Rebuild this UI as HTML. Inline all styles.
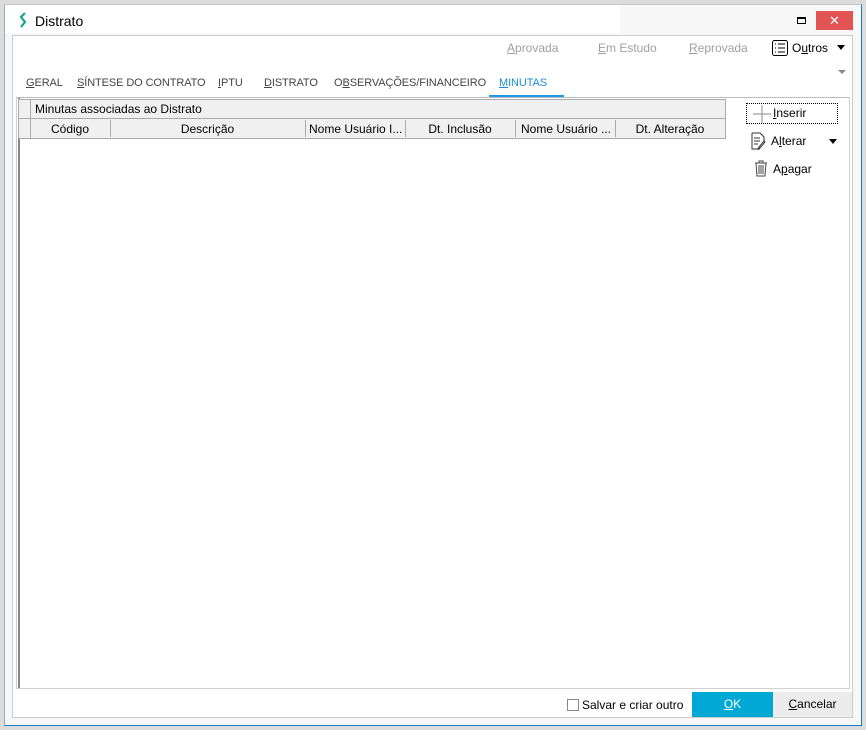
<!DOCTYPE html>
<html><head><style>
*{margin:0;padding:0;box-sizing:border-box}
body{width:866px;height:730px;background:#dcdcdc;font-family:"Segoe UI","Liberation Sans",sans-serif;font-size:12px;color:#000;position:relative;overflow:hidden}
.a{position:absolute}
u{text-decoration:underline}
.t{font-size:11px;color:#444;letter-spacing:-0.1px}
</style></head><body>
<div class="a" style="left:4px;top:4px;width:858px;height:722px;background:#fff;border:1px solid #1979ca;border-top-color:#c8c8c8;border-left-color:#9ab;"></div>
<div class="a" style="left:5px;top:5px;width:856px;height:720px;background:#f7f7f7"></div>
<div class="a" style="left:5px;top:5px;width:615px;height:28px;background:#fff"></div>
<svg class="a" style="left:18px;top:12px" width="10" height="16"><path d="M7 1 L3 5 L7 10 L3 15" stroke="#13a88a" stroke-width="2.2" fill="none"/></svg>
<div class="a" style="left:35px;top:13px;font-size:14px">Distrato</div>
<div class="a" style="left:797px;top:17px;width:9px;height:7px;border:1px solid #000;border-top-width:2px"></div>
<div class="a" style="left:816px;top:11px;width:37px;height:19px;background:#e25454;color:#fff;text-align:center;font-size:13px;line-height:19px">✕</div>
<div class="a" style="left:12px;top:35px;width:841px;height:683px;background:#fff;border:1px solid #ccc"></div>
<div class="a" style="left:507px;top:41px;color:#a0a0a0"><u>A</u>provada</div>
<div class="a" style="left:598px;top:41px;color:#a0a0a0"><u>E</u>m Estudo</div>
<div class="a" style="left:689px;top:41px;color:#a0a0a0"><u>R</u>eprovada</div>
<svg class="a" style="left:772px;top:40px" width="16" height="16"><rect x="0.5" y="0.5" width="15" height="15" rx="2" fill="none" stroke="#000"/><path d="M3 4h1M3 8h1M3 12h1M6 4h7M6 8h7M6 12h7" stroke="#000"/></svg>
<div class="a" style="left:792px;top:41px">O<u>u</u>tros</div>
<div class="a" style="left:837px;top:45px;border:4px solid transparent;border-top:5px solid #000"></div>
<div class="a" style="left:838px;top:70px;border:4px solid transparent;border-top:4px solid #888"></div>
<div class="a t" style="left:26px;top:77px"><u>G</u>ERAL</div>
<div class="a t" style="left:77px;top:77px"><u>S</u>ÍNTESE DO CONTRATO</div>
<div class="a t" style="left:218px;top:77px"><u>I</u>PTU</div>
<div class="a t" style="left:264px;top:77px"><u>D</u>ISTRATO</div>
<div class="a t" style="left:334px;top:77px">O<u>B</u>SERVAÇÕES/FINANCEIRO</div>
<div class="a t" style="left:499px;top:77px;color:#1a8ad8"><u>M</u>INUTAS</div>
<div class="a" style="left:489px;top:95px;width:75px;height:2px;background:#1a9ae8"></div>
<div class="a" style="left:16px;top:97px;width:834px;height:592px;border:1px solid #d0d0d0;border-top-color:#bbb"></div>
<div class="a" style="left:18px;top:98px;width:2px;height:590px;background:#888"></div>
<div class="a" style="left:18px;top:99px;width:708px;height:40px;background:#f0f0f0;border:1px solid #aaa"></div>
<div class="a" style="left:30px;top:99px;width:1px;height:40px;background:#aaa"></div>
<div class="a" style="left:19px;top:118px;width:706px;height:1px;background:#aaa"></div>
<div class="a" style="left:35px;top:102px">Minutas associadas ao Distrato</div>
<div class="a" style="left:30px;top:122px;width:80px;text-align:center">Código</div>
<div class="a" style="left:110px;top:120px;width:1px;height:17px;background:#aaa"></div>
<div class="a" style="left:110px;top:122px;width:195px;text-align:center">Descrição</div>
<div class="a" style="left:305px;top:120px;width:1px;height:17px;background:#aaa"></div>
<div class="a" style="left:309px;top:122px">Nome Usuário I...</div>
<div class="a" style="left:405px;top:120px;width:1px;height:17px;background:#aaa"></div>
<div class="a" style="left:405px;top:122px;width:110px;text-align:center">Dt. Inclusão</div>
<div class="a" style="left:515px;top:120px;width:1px;height:17px;background:#aaa"></div>
<div class="a" style="left:521px;top:122px">Nome Usuário ...</div>
<div class="a" style="left:615px;top:120px;width:1px;height:17px;background:#aaa"></div>
<div class="a" style="left:615px;top:122px;width:110px;text-align:center">Dt. Alteração</div>
<div class="a" style="left:746px;top:103px;width:92px;height:21px;border:1px dotted #000"></div>
<svg class="a" style="left:753px;top:105px" width="18" height="18"><path d="M9 0v18M0 9h18" stroke="#888"/></svg>
<div class="a" style="left:773px;top:106px"><u>I</u>nserir</div>
<svg class="a" style="left:751px;top:132px" width="16" height="18"><path d="M1 1h8l4 4v5M1 1v16h8M3 6h6M3 9h6M3 12h4M13 9l-5 6-1 2 2-1 5-6z" stroke="#333" fill="none"/></svg>
<div class="a" style="left:771px;top:134px">A<u>l</u>terar</div>
<div class="a" style="left:829px;top:139px;border:4px solid transparent;border-top:5px solid #000"></div>
<svg class="a" style="left:754px;top:160px" width="14" height="17"><path d="M1 3h12M5 3V1h4v2M2 3l1 13h8l1-13M5 5v9M7 5v9M9 5v9" stroke="#444" fill="none"/></svg>
<div class="a" style="left:773px;top:162px">A<u>p</u>agar</div>
<div class="a" style="left:567px;top:699px;width:12px;height:12px;border:1px solid #888;background:#fff"></div>
<div class="a" style="left:582px;top:698px">Salvar e criar outro</div>
<div class="a" style="left:692px;top:692px;width:81px;height:25px;background:#00a8d6;color:#fff;text-align:center;line-height:25px"><u>O</u>K</div>
<div class="a" style="left:773px;top:692px;width:79px;height:25px;background:#ececec;text-align:center;line-height:25px"><u>C</u>ancelar</div>
</body></html>
